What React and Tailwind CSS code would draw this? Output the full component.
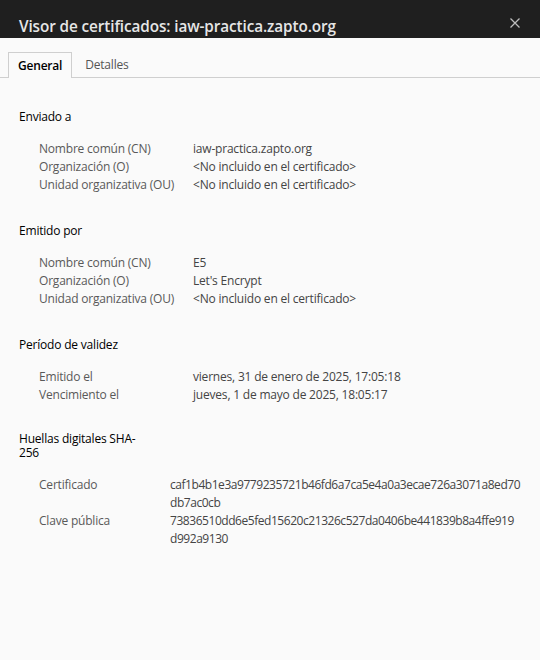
import React from "react";

const F = { fontFamily: '"Open Sans", "Noto Sans", sans-serif' };

function Row({ label, value, labelW = "w-[154px]", valueCls = "" }) {
  return (
    <div className="flex h-[18px] items-center">
      <div className={`${labelW} shrink-0 text-[#595959]`}>{label}</div>
      <div className={`text-[#444] ${valueCls}`}>{value}</div>
    </div>
  );
}

export default function App() {
  const ni = "<No incluido en el certificado>";
  const hx = "tracking-[-0.45px]";
  return (
    <div className="w-[540px] h-[660px] bg-[#fafafa] flex flex-col text-[12px] tracking-[-0.2px]" style={F}>
      <div className="h-[38px] bg-[#1f1f1f] flex items-end justify-between pl-[19px] pr-[19px] pb-[1px] shrink-0">
        <div className="text-[#e6e6e6] text-[15.3px] font-semibold leading-[22px] tracking-[-0.1px]">
          Visor de certificados: iaw-practica.zapto.org
        </div>
        <svg width="12" height="12" viewBox="0 0 12 12" className="mb-[8px]">
          <path d="M1.5 1.5 L10.5 10.5 M10.5 1.5 L1.5 10.5" stroke="#bdbdbd" strokeWidth="1.3" />
        </svg>
      </div>
      <div className="mt-[14px] mx-0 flex border-b border-[#cfcfcf] h-[26px] pl-[8px]">
        <div className="px-[9px] border border-b-0 border-[#cfcfcf] bg-[#fafafa] -mb-px font-semibold text-black flex items-center h-[26px]">
          General
        </div>
        <div className="px-[13px] text-[#555] flex items-center">Detalles</div>
      </div>
      <div className="pl-[19px] pt-[30px] flex flex-col gap-[28px]">
        <div>
          <div className="h-[18px] flex items-center text-black">Enviado a</div>
          <div className="pl-5 mt-[14px]">
            <Row label="Nombre común (CN)" value="iaw-practica.zapto.org" />
            <Row label="Organización (O)" value={ni} />
            <Row label="Unidad organizativa (OU)" value={ni} />
          </div>
        </div>
        <div>
          <div className="h-[18px] flex items-center text-black">Emitido por</div>
          <div className="pl-5 mt-[14px]">
            <Row label="Nombre común (CN)" value="E5" />
            <Row label="Organización (O)" value="Let's Encrypt" />
            <Row label="Unidad organizativa (OU)" value={ni} />
          </div>
        </div>
        <div>
          <div className="h-[18px] flex items-center text-black">Período de validez</div>
          <div className="pl-5 mt-[14px]">
            <Row label="Emitido el" value="viernes, 31 de enero de 2025, 17:05:18" />
            <Row label="Vencimiento el" value="jueves, 1 de mayo de 2025, 18:05:17" />
          </div>
        </div>
        <div>
          <div className="text-black leading-[14px]">
            Huellas digitales SHA-
            <br />
            256
          </div>
          <div className="pl-5 mt-[16px]">
            <Row labelW="w-[131px]" valueCls={hx} label="Certificado" value="caf1b4b1e3a9779235721b46fd6a7ca5e4a0a3ecae726a3071a8ed70" />
            <Row labelW="w-[131px]" valueCls={hx} label="" value="db7ac0cb" />
            <Row labelW="w-[131px]" valueCls={hx} label="Clave pública" value="73836510dd6e5fed15620c21326c527da0406be441839b8a4ffe919" />
            <Row labelW="w-[131px]" valueCls={hx} label="" value="d992a9130" />
          </div>
        </div>
      </div>
    </div>
  );
}
